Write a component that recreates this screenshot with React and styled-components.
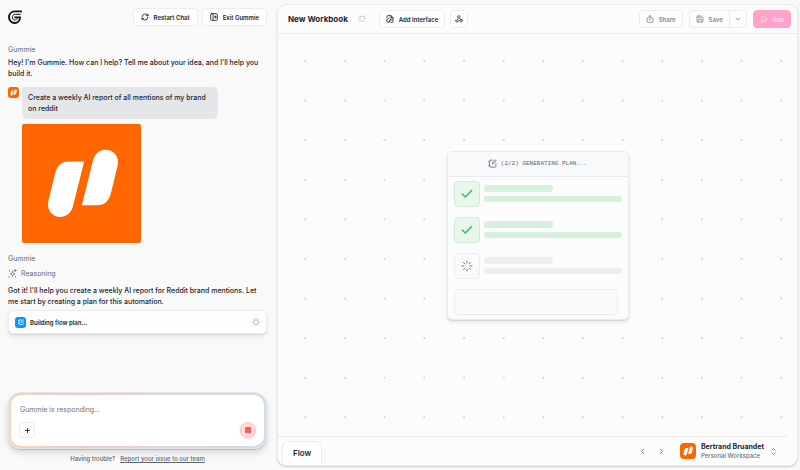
import React from 'react'
import styled, { createGlobalStyle } from 'styled-components'
import {
  Check,
  ChevronDown,
  ChevronLeft,
  ChevronRight,
  ChevronsUpDown,
  Loader,
  Play,
  Plus,
  RefreshCw,
  Save,
  Webhook
} from 'lucide-react'

const GlobalStyle = createGlobalStyle`
  * {
    box-sizing: border-box;
  }

  body {
    margin: 0;
    background: #f9f9f9;
    color: #1d1f2b;
    font-family: Inter, 'Liberation Sans', sans-serif;
    font-size: 7px;
    line-height: 11px;
  }

  button,
  textarea {
    font: inherit;
    color: inherit;
  }

  svg {
    display: block;
    flex: none;
  }

  p,
  h1,
  h2 {
    margin: 0;
  }
`

const Page = styled.div`
  display: grid;
  grid-template-columns: 277fr 523fr;
  min-height: 100vh;
`

/* chat side */

const Chat = styled.aside`
  display: flex;
  flex-direction: column;
  min-width: 0;
  padding: 8px 10px 6px 8px;
`

const ChatHeader = styled.header`
  display: flex;
  align-items: center;
  gap: 4px;
  margin-bottom: 18px;
`

const Spacer = styled.div`
  flex: 1;
`

const Button = styled.button`
  display: flex;
  align-items: center;
  gap: 5px;
  height: 18px;
  padding: 0 ${({ $pad }) => $pad || 6}px;
  border: 1px solid #ececee;
  border-radius: 4px;
  background: #fefefe;
  color: ${({ $muted }) => ($muted ? '#85868e' : '#1d1f2b')};
  font-size: 6px;
  font-weight: 600;
  white-space: nowrap;
`

const Author = styled.h2`
  margin-bottom: 2px;
  color: #666872;
  font-size: 7px;
  font-weight: 400;
`

const Message = styled.p`
  padding-right: 4px;
  font-weight: 500;
`

const UserMessage = styled.div`
  display: flex;
  align-items: flex-start;
  gap: 3px;
  margin: 8px 0 10px;
`

const UserContent = styled.div`
  display: flex;
  flex-direction: column;
  align-items: flex-start;
  gap: 5px;
`

const Bubble = styled.p`
  max-width: 196px;
  padding: 5px 6px;
  border-radius: 2px 5px 5px 5px;
  background: #e5e6ea;
  font-weight: 500;
`

const Logo = styled.svg`
  width: ${({ $size }) => $size}px;
  height: ${({ $size }) => $size}px;
  border-radius: ${({ $radius }) => $radius}px;
  background: #ff6600;
`

const Reasoning = styled.div`
  display: flex;
  align-items: center;
  gap: 4px;
  margin: 2px 0 6px;
  color: #666872;
`

const TaskCard = styled.div`
  display: flex;
  align-items: center;
  gap: 4px;
  height: 24px;
  margin-top: 3px;
  padding: 0 6px;
  border: 1px solid #eeeeef;
  border-radius: 5px;
  background: #fdfdfd;
  box-shadow: 0 3px 5px rgba(20, 20, 30, 0.08), 0 1px 1px rgba(20, 20, 30, 0.1);
  color: #777981;
`

const TaskIcon = styled.span`
  display: grid;
  place-items: center;
  width: 11px;
  height: 11px;
  border-radius: 3px;
  background: #0a94ff;
  color: #ffffff;
`

const TaskLabel = styled.span`
  flex: 1;
  color: #1d1f2b;
  font-size: 6px;
  font-weight: 600;
`

const Composer = styled.form`
  margin-top: auto;
  padding: 2px;
  border-radius: 13px;
  border: 1px solid #e2e4e8;
  background: linear-gradient(90deg, #f5d6c0, #f3c8c3 30%, #ebd0e0 55%, #cbdcec);
  box-shadow: 0 4px 6px rgba(20, 20, 30, 0.14), 0 1px 1px rgba(20, 20, 30, 0.16);
`

const ComposerBox = styled.div`
  display: flex;
  flex-direction: column;
  gap: 5px;
  padding: 7px 8px 8px;
  border-radius: 10px;
  background: #ffffff;
`

const Prompt = styled.textarea`
  display: block;
  width: 100%;
  height: 15px;
  padding: 2px 0 0 1px;
  border: 0;
  outline: 0;
  resize: none;
  overflow: hidden;
  background: none;

  &::placeholder {
    color: #6f717a;
    opacity: 1;
  }
`

const ComposerActions = styled.div`
  display: flex;
  align-items: center;
  justify-content: space-between;
`

const AddButton = styled.button`
  display: grid;
  place-items: center;
  width: 16px;
  height: 16px;
  padding: 0;
  border: 1px solid #eeeeef;
  border-radius: 3px;
  background: #fdfdfd;
`

const StopButton = styled.button`
  display: grid;
  place-items: center;
  width: 16px;
  height: 16px;
  padding: 0;
  border: 1px solid #fdc5c7;
  border-radius: 50%;
  background: #ffdcdd;
  box-shadow: 0 1px 2px rgba(255, 90, 90, 0.25);

  &::before {
    content: '';
    width: 6px;
    height: 6px;
    background: #ff5a5f;
  }
`

const Help = styled.p`
  display: flex;
  justify-content: center;
  gap: 5px;
  margin-top: 4px;
  color: #5f616b;
  font-size: 6px;
  font-weight: 500;
`

const HelpLink = styled.a`
  color: inherit;
  text-underline-offset: 1px;
`

/* workbook side */

const Workbook = styled.main`
  display: flex;
  flex-direction: column;
  min-width: 0;
  margin: 4px 2px 4px 0;
  border: 1px solid #ececed;
  border-radius: 9px;
  background: #fcfcfc;
  box-shadow: 0 1px 2px rgba(20, 20, 30, 0.2);
  overflow: hidden;
`

const Toolbar = styled.header`
  display: flex;
  align-items: center;
  gap: 5px;
  height: 29px;
  padding: 0 6px 0 10px;
  border-bottom: 1px solid #ececed;
`

const Title = styled.h1`
  margin-right: 5px;
  font-size: 8px;
  font-weight: 700;
  white-space: nowrap;
`

const Status = styled.span`
  margin-right: 8px;
  color: #c6c7cb;
`

const SplitButton = styled.div`
  display: flex;
  margin: 0 1px;

  ${Button}:first-child {
    border-right: 0;
    border-radius: 4px 0 0 4px;
  }

  ${Button}:last-child {
    border-radius: 0 4px 4px 0;
  }
`

const RunButton = styled(Button)`
  border-color: #ffa3cb;
  background: #ffa3cb;
  color: #ffe4f0;
`

const Canvas = styled.section`
  display: grid;
  grid-template: 1fr / 1fr;
  flex: 1;
`

const Dots = styled.svg`
  grid-area: 1 / 1;
  width: 100%;
  height: 100%;
`

const PlanCard = styled.article`
  grid-area: 1 / 1;
  place-self: center;
  width: 182px;
  border: 1px solid #e9eaec;
  border-radius: 5px;
  background: #fcfcfc;
  box-shadow: 0 3px 5px rgba(20, 20, 30, 0.07), 0 1px 1px rgba(20, 20, 30, 0.12);
  overflow: hidden;
`

const PlanHeader = styled.header`
  display: flex;
  align-items: center;
  justify-content: center;
  gap: 4px;
  height: 25px;
  border-bottom: 1px solid #e9eaec;
  background: #f8f9fb;
  color: #5f616b;
  font-family: 'Liberation Mono', monospace;
  font-size: 6px;
`

const Steps = styled.div`
  display: flex;
  flex-direction: column;
  gap: 10px;
  padding: 4px 6px;
`

const Step = styled.div`
  display: flex;
  align-items: center;
  gap: 4px;
`

const StepIcon = styled.span`
  display: grid;
  place-items: center;
  width: 26px;
  height: 26px;
  border: 1px solid ${({ $done }) => ($done ? '#cfeed8' : '#ededee')};
  border-radius: 4px;
  background: ${({ $done }) => ($done ? '#e8f6ec' : '#fafafa')};
  color: ${({ $done }) => ($done ? '#2fbf62' : '#777981')};
`

const Lines = styled.div`
  display: flex;
  flex: 1;
  flex-direction: column;
  gap: 4px;
`

const Line = styled.span`
  width: ${({ $short }) => ($short ? '50%' : '100%')};
  height: ${({ $short }) => ($short ? 7 : 6)}px;
  border-radius: 3px;
  background: ${({ $done }) => ($done ? '#d6f0dd' : '#eeefef')};
`

const EmptyStep = styled.div`
  height: 26px;
  margin-right: 4px;
  border: 1px solid #ededee;
  border-radius: 4px;
  background: #fafafa;
`

const Footer = styled.footer`
  display: flex;
  align-items: flex-end;
  height: 29px;
  margin-right: 10px;
  padding-left: 4px;
  border-top: 1px solid #ececed;
`

const Tab = styled.button`
  height: 24px;
  padding: 0 10px;
  border: 1px solid #ececed;
  border-bottom: 0;
  border-radius: 6px 6px 0 0;
  background: #ffffff;
  font-size: 8px;
  font-weight: 600;
`

const Account = styled.div`
  display: flex;
  align-items: center;
  height: 100%;
  margin-left: auto;
  padding-right: 9px;
`

const IconButton = styled.button`
  display: grid;
  place-items: center;
  width: 19px;
  height: 19px;
  padding: 0;
  border: 0;
  background: none;
  color: #6a6c75;
`

const AccountButton = styled.button`
  display: flex;
  align-items: center;
  gap: 5px;
  margin-left: 9px;
  padding: 0;
  border: 0;
  background: none;
  color: #777981;
  line-height: 9px;
  text-align: left;
`

const AccountName = styled.span`
  display: block;
  color: #1d1f2b;
  font-size: 7px;
  font-weight: 700;
`

const AccountPlace = styled.span`
  display: block;
  color: #6f717a;
  font-size: 6px;
  font-weight: 500;
`

const blade =
  'M138 112H186L153 244C148 265 134 278 115 278C90 278 73 257 79 230L99 148C105 124 119 112 138 112Z'

function Brand({ size, radius }) {
  return (
    <Logo $size={size} $radius={radius} viewBox="0 0 356 356">
      <g fill="#fff">
        <path d={blade} />
        <path d={blade} transform="rotate(180 182.5 177.5)" />
      </g>
    </Logo>
  )
}

function GummieLogo() {
  return (
    <svg width="14" height="14" viewBox="0 0 42 42" fill="none" stroke="#0c0d12">
      <path d="M42 4H21C10 4 3 12 3 21.5S11 39 20 39S36 32 36 22H19" strokeWidth="5.5" />
      <path d="M38 13H22C17 13 14 15 13 20C12 26 16 30 20 30C23 30 26 29 28 25" strokeWidth="3" />
    </svg>
  )
}

function Stroke({ size, width = 2, children }) {
  return (
    <svg
      width={size}
      height={size}
      viewBox="0 0 24 24"
      fill="none"
      stroke="currentColor"
      strokeWidth={width}
      strokeLinecap="round"
      strokeLinejoin="round"
    >
      {children}
    </svg>
  )
}

const PanelIcon = () => (
  <Stroke size={8} width={2.5}>
    <rect x="2" y="2" width="20" height="20" rx="3" />
    <path d="M9 2v20M16 9v6M13 12h6" />
  </Stroke>
)

const EditIcon = ({ size, width }) => (
  <Stroke size={size} width={width}>
    <path d="M12 3H7a3 3 0 0 0-3 3v13a3 3 0 0 0 3 3h11a3 3 0 0 0 3-3v-6" />
    <path d="M2 7h3M2 18h3M12 12l1-4 6-6 3 3-6 6z" />
  </Stroke>
)

const InterfaceIcon = () => (
  <Stroke size={8} width={2.5}>
    <path d="M3 8V4a2 2 0 0 1 2-2h10l6 6v12a2 2 0 0 1-2 2h-4M15 2v6h6M3 12v8a2 2 0 0 0 2 2h2" />
    <path d="M9 21l1-4 6-6 2 2-6 6zM7 12l4-4" />
  </Stroke>
)

const ShareIcon = () => (
  <Stroke size={8} width={2.5}>
    <path d="M12 16V2M7 7l5-5 5 5M6 10H3v9a3 3 0 0 0 3 3h12a3 3 0 0 0 3-3v-9h-3" />
  </Stroke>
)

const StatusIcon = () => (
  <Stroke size={8} width={2.5}>
    <path d="M8 4h8a2 2 0 0 1 2 2v9a2 2 0 0 1-2 2l-4 4-4-4a2 2 0 0 1-2-2V6a2 2 0 0 1 2-2z" />
    <path d="M2 3l1 1M22 3l-1 1M1 11h1M23 11h-1M3 19l1-1M21 19l-1-1" />
  </Stroke>
)

const SparkIcon = () => (
  <Stroke size={9} width={2}>
    <path d="M12 6c0 5 2 6 6 7-4 1-6 2-6 7 0-5-2-6-6-7 4-1 6-2 6-7z" />
    <path d="M4 3v3M19 1v6M16 4h6M3 20v2M20 20v1" />
  </Stroke>
)

const steps = [true, true, false]

function ChatPanel() {
  return (
    <Chat>
      <ChatHeader>
        <GummieLogo />
        <Spacer />
        <Button type="button" $pad={7}>
          <RefreshCw size={8} strokeWidth={2.5} />
          Restart Chat
        </Button>
        <Button type="button" $pad={7}>
          <PanelIcon />
          Exit Gummie
        </Button>
      </ChatHeader>

      <Author>Gummie</Author>
      <Message>
        Hey! I'm Gummie. How can I help? Tell me about your idea, and I'll help
        you build it.
      </Message>

      <UserMessage>
        <Brand size={11} radius={3} />
        <UserContent>
          <Bubble>
            Create a weekly AI report of all mentions of my brand on reddit
          </Bubble>
          <Brand size={119} radius={2} />
        </UserContent>
      </UserMessage>

      <Author>Gummie</Author>
      <Reasoning>
        <SparkIcon />
        Reasoning
      </Reasoning>
      <Message>
        Got it! I'll help you create a weekly AI report for Reddit brand
        mentions. Let me start by creating a plan for this automation.
      </Message>
      <TaskCard>
        <TaskIcon>
          <EditIcon size={6} width={3} />
        </TaskIcon>
        <TaskLabel>Building flow plan...</TaskLabel>
        <Loader size={8} />
      </TaskCard>

      <Composer onSubmit={event => event.preventDefault()}>
        <ComposerBox>
          <Prompt aria-label="Message" placeholder="Gummie is responding..." />
          <ComposerActions>
            <AddButton type="button" aria-label="Add attachment">
              <Plus size={7} strokeWidth={3} />
            </AddButton>
            <StopButton type="button" aria-label="Stop" />
          </ComposerActions>
        </ComposerBox>
      </Composer>
      <Help>
        Having trouble?
        <HelpLink href="#">Report your issue to our team</HelpLink>
      </Help>
    </Chat>
  )
}

function WorkbookPanel() {
  return (
    <Workbook>
      <Toolbar>
        <Title>New Workbook</Title>
        <Status>
          <StatusIcon />
        </Status>
        <Button type="button">
          <InterfaceIcon />
          Add Interface
        </Button>
        <Button type="button" $pad={4} aria-label="Webhooks">
          <Webhook size={8} strokeWidth={2.5} />
        </Button>
        <Spacer />
        <Button type="button" $muted>
          <ShareIcon />
          Share
        </Button>
        <SplitButton>
          <Button type="button" $muted>
            <Save size={8} strokeWidth={2.5} />
            Save
          </Button>
          <Button type="button" $muted $pad={4} aria-label="More save options">
            <ChevronDown size={8} strokeWidth={2.5} />
          </Button>
        </SplitButton>
        <RunButton type="button">
          <Play size={8} strokeWidth={2.5} />
          Run
        </RunButton>
      </Toolbar>

      <Canvas>
        <Dots>
          <pattern id="dots" x="7.3" y="7" width="39.67" height="39.6" patternUnits="userSpaceOnUse">
            <circle cx="20" cy="20" r="0.9" fill="#c4c5c9" />
          </pattern>
          <rect width="100%" height="100%" fill="url(#dots)" />
        </Dots>
        <PlanCard>
          <PlanHeader>
            <EditIcon size={9} width={2} />
            (2/2) GENERATING PLAN...
          </PlanHeader>
          <Steps>
            {steps.map((done, index) => (
              <Step key={index}>
                <StepIcon $done={done}>
                  {done ? (
                    <Check size={14} strokeWidth={2.5} />
                  ) : (
                    <Loader size={12} />
                  )}
                </StepIcon>
                <Lines>
                  <Line $done={done} $short />
                  <Line $done={done} />
                </Lines>
              </Step>
            ))}
            <EmptyStep />
          </Steps>
        </PlanCard>
      </Canvas>

      <Footer>
        <Tab type="button">Flow</Tab>
        <Account>
          <IconButton type="button" aria-label="Previous">
            <ChevronLeft size={9} strokeWidth={2.5} />
          </IconButton>
          <IconButton type="button" aria-label="Next">
            <ChevronRight size={9} strokeWidth={2.5} />
          </IconButton>
          <AccountButton type="button">
            <Brand size={16} radius={4} />
            <span>
              <AccountName>Bertrand Bruandet</AccountName>
              <AccountPlace>Personal Workspace</AccountPlace>
            </span>
            <ChevronsUpDown size={9} />
          </AccountButton>
        </Account>
      </Footer>
    </Workbook>
  )
}

export default function App() {
  return (
    <>
      <GlobalStyle />
      <Page>
        <ChatPanel />
        <WorkbookPanel />
      </Page>
    </>
  )
}
